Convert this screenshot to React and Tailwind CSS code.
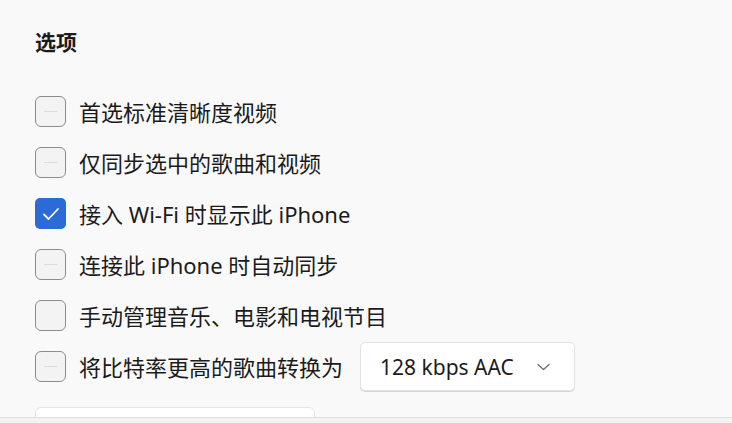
import React from "react";

const font = { fontFamily: '"Noto Sans", "Noto Sans CJK SC", sans-serif' };

function Box({ checked, dash }) {
  if (checked) {
    return (
      <div className="w-[31px] h-[31px] rounded-[5px] bg-[#2b6bd8] flex items-center justify-center shrink-0">
        <svg width="18" height="14" viewBox="0 0 18 14" fill="none">
          <path d="M2 7.5 L6.5 12 L16 2" stroke="white" strokeWidth="1.8" strokeLinecap="round" strokeLinejoin="round" />
        </svg>
      </div>
    );
  }
  return (
    <div className="w-[31px] h-[31px] rounded-[6px] border-[1.5px] border-[#8c8c8c] bg-[#f3f3f3] flex items-center justify-center shrink-0">
      {dash && <div className="w-[13px] h-[1.5px] bg-[#dcdcdc]" />}
    </div>
  );
}

function Row({ checked, dash, children }) {
  return (
    <div className="h-[51px] flex items-center gap-[13px]">
      <Box checked={checked} dash={dash} />
      {children}
    </div>
  );
}

export default function App() {
  return (
    <div className="w-[732px] h-[423px] bg-[#f9f9f9] overflow-hidden flex flex-col text-[#1b1b1b]" style={font}>
      <div className="h-[417px] overflow-hidden pl-[35px] pt-[28px]">
        <div className="text-[21px] font-bold leading-[28px]">选项</div>
        <div className="mt-[30px] flex flex-col text-[22px] leading-[28px]">
          <Row dash><span>首选标准清晰度视频</span></Row>
          <Row dash><span>仅同步选中的歌曲和视频</span></Row>
          <Row checked><span>接入 Wi-Fi 时显示此 iPhone</span></Row>
          <Row dash><span>连接此 iPhone 时自动同步</span></Row>
          <Row><span>手动管理音乐、电影和电视节目</span></Row>
          <Row dash>
            <span>将比特率更高的歌曲转换为</span>
            <div className="ml-[4px] w-[215px] h-[49px] rounded-[5px] bg-white border border-[#e3e3e3] shadow-[0_1px_0_#d6d6d6] flex items-center justify-between pl-[19px] pr-[24px]">
              <span className="text-[21px]">128 kbps AAC</span>
              <svg width="13" height="8" viewBox="0 0 13 8" fill="none">
                <path d="M1 1.5 L6.5 6.5 L12 1.5" stroke="#6b6b6b" strokeWidth="1.2" strokeLinecap="round" strokeLinejoin="round" />
              </svg>
            </div>
          </Row>
          <div className="mt-[15px] w-[280px] h-[40px] rounded-[6px] bg-white border border-[#e6e6e6]" />
        </div>
      </div>
      <div className="h-[6px] border-t-[1.5px] border-[#dedede] bg-[#f3f3f3]" />
    </div>
  );
}
